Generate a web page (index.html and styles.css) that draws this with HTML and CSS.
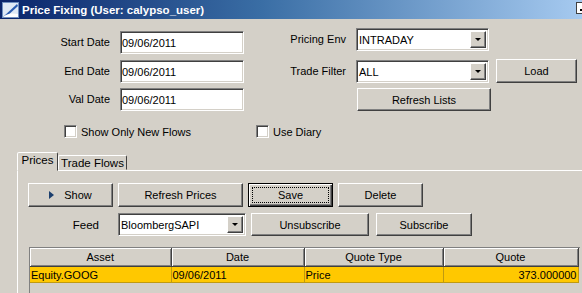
FILE: index.html
```html
<!DOCTYPE html>
<html lang="en">
<head>
    <meta charset="UTF-8">
    <title>Price Fixing</title>
    <link rel="stylesheet" href="styles.css">
</head>
<body>
    <div class="window">
        <div class="titlebar">
            <svg class="app-icon" width="17" height="16" viewBox="0 0 17 16">
                <rect x="0.5" y="0.5" width="16" height="15" fill="#dfe9f5" stroke="#6f8fbf"/>
                <path d="M1 15 L15 2 L16 4 L4 15 Z" fill="#2a5cb0"/>
                <path d="M1 15 Q6 10 16 12 L16 15 Z" fill="#ffffff"/>
            </svg>
            <span class="title">Price Fixing (User: calypso_user)</span>
            <span class="min-btn"></span>
        </div>

        <div class="filters">
            <div class="dates">
                <label>Start Date</label>
                <div class="field">09/06/2011</div>
                <label>End Date</label>
                <div class="field">09/06/2011</div>
                <label>Val Date</label>
                <div class="field">09/06/2011</div>
            </div>
            <div class="env">
                <label>Pricing Env</label>
                <div class="field combo"><span>INTRADAY</span><span class="arrow"></span></div>
                <span></span>
                <label>Trade Filter</label>
                <div class="field combo"><span>ALL</span><span class="arrow"></span></div>
                <button class="btn load">Load</button>
                <span></span>
                <button class="btn refresh-lists">Refresh Lists</button>
            </div>
        </div>

        <div class="checks">
            <div class="check first"><span class="box"></span>Show Only New Flows</div>
            <div class="check"><span class="box"></span>Use Diary</div>
        </div>

        <div class="tabs">
            <div class="tab active">Prices</div>
            <div class="tab">Trade Flows</div>
        </div>

        <div class="panel">
            <div class="actions">
                <button class="btn show"><span class="play"></span>Show</button>
                <button class="btn refresh">Refresh Prices</button>
                <button class="btn save"><span class="focus">Save</span></button>
                <button class="btn delete">Delete</button>
            </div>
            <div class="feed-row">
                <label>Feed</label>
                <div class="field combo feed"><span>BloombergSAPI</span><span class="arrow"></span></div>
                <button class="btn unsub">Unsubscribe</button>
                <button class="btn sub">Subscribe</button>
            </div>
            <div class="grid">
                <table>
                    <colgroup>
                        <col class="c-asset">
                        <col class="c-date">
                        <col class="c-type">
                        <col class="c-quote">
                    </colgroup>
                    <thead>
                        <tr><th>Asset</th><th>Date</th><th>Quote Type</th><th>Quote</th></tr>
                    </thead>
                    <tbody>
                        <tr class="selected">
                            <td>Equity.GOOG</td>
                            <td>09/06/2011</td>
                            <td>Price</td>
                            <td class="num">373.000000</td>
                        </tr>
                    </tbody>
                </table>
            </div>
        </div>
    </div>
</body>
</html>
```

FILE: styles.css
```css
body {
    margin: 0;
    padding: 0;
    font-family: "Liberation Sans", Arial, sans-serif;
    font-size: 11px;
    color: #000;
    background-color: #d4d0c8;
    overflow: hidden;
}
.window {
    width: 582px;
    height: 293px;
    overflow: hidden;
}
.titlebar {
    height: 19px;
    display: flex;
    align-items: center;
    background: linear-gradient(to right, #0a246a, #3a6ea5 45%, #a6caf0);
    overflow: hidden;
}
.app-icon {
    margin-left: 2px;
    flex: none;
}
.title {
    margin-left: 3px;
    color: #fff;
    font-weight: bold;
    font-size: 11.5px;
    flex: 1;
    white-space: nowrap;
}
.min-btn {
    flex: none;
    width: 16px;
    height: 12px;
    margin-right: -10px;
    margin-top: -3px;
    background: #fff;
    border: 1px solid #404040;
    box-sizing: border-box;
    position: relative;
}
.min-btn::after {
    content: "";
    position: absolute;
    left: 3px;
    bottom: 2px;
    width: 5px;
    height: 2px;
    background: #000;
}

/* sunken text fields */
.field {
    box-sizing: border-box;
    height: 23px;
    background: #fff;
    border: 1px solid;
    border-color: #808080 #fff #fff #808080;
    box-shadow: inset 1px 1px 0 #404040, inset -1px -1px 0 #d4d0c8;
    padding: 0 2px;
    display: flex;
    align-items: center;
    white-space: nowrap;
}
.combo span:first-child {
    flex: 1;
}
.arrow {
    width: 16px;
    height: 17px;
    box-sizing: border-box;
    background: #d4d0c8;
    border: 1px solid;
    border-color: #fff #404040 #404040 #fff;
    box-shadow: inset -1px -1px 0 #808080;
    position: relative;
}
.arrow::after {
    content: "";
    position: absolute;
    left: 4px;
    top: 6px;
    border-left: 3px solid transparent;
    border-right: 3px solid transparent;
    border-top: 3px solid #000;
}

/* raised buttons */
.btn {
    font: inherit;
    color: #000;
    box-sizing: border-box;
    height: 24px;
    padding: 0;
    background: #d4d0c8;
    border: 1px solid;
    border-color: #fff #404040 #404040 #fff;
    box-shadow: inset -1px -1px 0 #808080;
    display: flex;
    align-items: center;
    justify-content: center;
}

.filters {
    display: flex;
    padding-top: 9px;
}
.dates {
    display: grid;
    grid-template-columns: 110px 124px;
    grid-template-rows: 29px 28px 23px;
    column-gap: 10px;
    margin-top: 3px;
}
.dates label,
.env label {
    text-align: right;
    height: 23px;
    line-height: 23px;
}
.dates .field {
    padding-left: 1px;
}
.env {
    display: grid;
    grid-template-columns: 100px 140px 81px;
    grid-template-rows: 32px 28px 23px;
    margin-left: 12px;
}
.env label {
    padding-right: 10px;
}
.env .field {
    width: 133px;
}
.env .load {
    height: 24px;
    margin-top: -1px;
}
.refresh-lists {
    width: 134px;
    height: 23px;
    margin-left: 1px;
}

.checks {
    display: flex;
    margin-top: 14px;
    padding-left: 64px;
    height: 13px;
}
.check {
    display: flex;
    align-items: center;
}
.check.first {
    width: 192px;
}
.box {
    width: 13px;
    height: 13px;
    box-sizing: border-box;
    background: #fff;
    border: 1px solid;
    border-color: #808080 #fff #fff #808080;
    box-shadow: inset 1px 1px 0 #404040, inset -1px -1px 0 #d4d0c8;
    margin-right: 4px;
}

.tabs {
    display: flex;
    align-items: flex-end;
    margin-top: 14px;
    padding-left: 17px;
    height: 18px;
}
.tab {
    box-sizing: border-box;
    height: 15px;
    width: 69px;
    border: 1px solid;
    border-color: #fff #404040 transparent #fff;
    border-radius: 2px 2px 0 0;
    text-align: center;
    line-height: 14px;
    font-size: 11.5px;
}
.tab.active {
    width: 41px;
    line-height: 15px;
    background: #d4d0c8;
    position: relative;
    z-index: 1;
    margin-bottom: -1px;
    height: 19px;
}

.panel {
    border-top: 1px solid #fff;
    border-left: 1px solid #fff;
    margin-left: 17px;
    padding: 12px 0 0 10px;
}
.actions {
    display: flex;
    gap: 5px;
}
.show { width: 85px; }
.refresh { width: 125px; }
.save {
    width: 85px;
    border: 1px solid #000;
    box-shadow: inset 1px 1px 0 #fff, inset -1px -1px 0 #404040, inset -2px -2px 0 #808080;
    padding: 3px;
}
.save .focus {
    flex: 1;
    align-self: stretch;
    border: 1px dotted #000;
    display: flex;
    align-items: center;
    justify-content: center;
}
.delete { width: 85px; }
.play {
    border-top: 4px solid transparent;
    border-bottom: 4px solid transparent;
    border-left: 5px solid #1c3f6e;
    margin-right: 10px;
}

.feed-row {
    display: flex;
    align-items: center;
    margin-top: 6px;
}
.feed-row label {
    width: 90px;
    box-sizing: border-box;
    text-align: right;
    padding-right: 19px;
    font-size: 11.5px;
}
.feed {
    width: 128px;
}
.unsub {
    width: 118px;
    height: 23px;
    margin-left: 5px;
}
.sub {
    width: 96px;
    height: 23px;
    margin-left: 7px;
}

.grid {
    margin-top: 11px;
    margin-left: 1px;
    width: 550px;
    border-top: 1px solid #808080;
    border-left: 1px solid #808080;
    height: 60px;
}
table {
    border-collapse: collapse;
    table-layout: fixed;
    width: 548px;
}
.c-asset { width: 141px; }
.c-date { width: 133px; }
.c-type { width: 139px; }
.c-quote { width: 135px; }
th {
    font-weight: normal;
    height: 18px;
    padding: 0;
    background: #d4d0c8;
    border-right: 1px solid #404040;
    border-bottom: 1px solid #404040;
    box-shadow: inset 1px 1px 0 #fff, inset -1px -1px 0 #808080;
    text-align: center;
}
td {
    height: 15px;
    padding: 0 1px;
    background: #ffc800;
    border-right: 1px solid #c09a10;
    border-bottom: 1px solid #c09a10;
    white-space: nowrap;
}
td.num {
    text-align: right;
}
```
